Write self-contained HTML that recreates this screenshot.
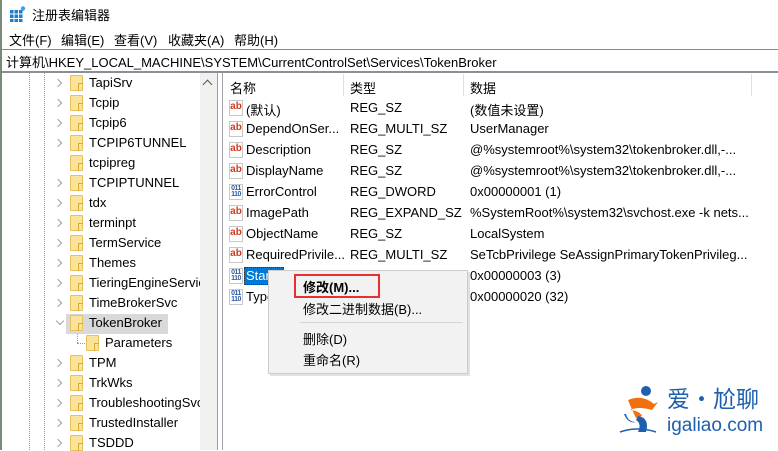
<!DOCTYPE html>
<html><head><meta charset="utf-8"><style>
*{margin:0;padding:0;box-sizing:border-box}
body{width:778px;height:450px;overflow:hidden;background:#fff;font-family:"Liberation Sans","Noto Sans CJK SC",sans-serif;font-size:12.5px;color:#000;position:relative}
.a{position:absolute;white-space:nowrap}
.fold{position:absolute;width:13px;height:16px;background:#fbe39a;border:1px solid #e8c15a;border-radius:1px}
.fold:after{content:"";position:absolute;right:-1px;bottom:-1px;width:4px;height:7px;border-left:1px solid #d9a93a;border-top:1px solid #d9a93a}
.arr{position:absolute;width:6px;height:6px;border-right:1.5px solid #a0a0a0;border-top:1.5px solid #a0a0a0;transform:rotate(45deg)}
.ico{position:absolute;width:14px;height:16px;border:1px solid #c8c8c8;background:#fff;font-size:10px;font-weight:bold;line-height:12px;text-align:center}
.ab{color:#d03c20}
.bin{color:#2a5aa8;font-size:7px;line-height:6px;letter-spacing:-0.5px;padding-top:1px}
</style></head><body>
<svg class="a" style="left:10px;top:6px" width="16" height="16" viewBox="0 0 16 16"><g fill="#1a7fd0"><rect x="0" y="4" width="3.5" height="3.5"/><rect x="4.5" y="4" width="3.5" height="3.5"/><rect x="9" y="4" width="3.5" height="3.5"/><rect x="0" y="8.5" width="3.5" height="3.5"/><rect x="4.5" y="8.5" width="3.5" height="3.5"/><rect x="9" y="8.5" width="3.5" height="3.5"/><rect x="0" y="13" width="3.5" height="3"/><rect x="4.5" y="13" width="3.5" height="3"/><rect x="9" y="13" width="3.5" height="3"/></g><circle cx="13" cy="2.5" r="2.2" fill="#3aa0e0"/></svg>
<div class="a" style="left:32px;top:5px;font-size:13px">注册表编辑器</div>
<div class="a" style="left:0;top:0;width:2px;height:450px;background:#7a8a7a"></div>
<div class="a" style="left:9px;top:30px;font-size:13px">文件(F)</div>
<div class="a" style="left:61px;top:30px;font-size:13px">编辑(E)</div>
<div class="a" style="left:114px;top:30px;font-size:13px">查看(V)</div>
<div class="a" style="left:168px;top:30px;font-size:13px">收藏夹(A)</div>
<div class="a" style="left:234px;top:30px;font-size:13px">帮助(H)</div>
<div class="a" style="left:2px;top:49px;width:776px;height:1px;background:#888"></div>
<div class="a" style="left:6px;top:52px;font-size:13px">计算机\HKEY_LOCAL_MACHINE\SYSTEM\CurrentControlSet\Services\TokenBroker</div>
<div class="a" style="left:2px;top:71px;width:776px;height:2px;background:#8a8e96"></div>
<div class="a" style="left:200px;top:73px;width:17px;height:377px;background:#f0f0f0"></div>
<div class="a" style="left:204px;top:81px;width:7px;height:7px;border-left:1.5px solid #555;border-top:1.5px solid #555;transform:rotate(45deg)"></div>
<div class="a" style="left:217px;top:73px;width:1px;height:377px;background:#a0a0a8"></div>
<div class="a" style="left:222px;top:73px;width:1px;height:377px;background:#a0a0a8"></div>
<div class="a" style="left:29px;top:73px;height:377px;border-left:1px dotted #999"></div>
<div class="a" style="left:44px;top:73px;height:377px;border-left:1px dotted #999"></div>
<div class="a" style="left:66px;top:314px;width:102px;height:20px;background:#d9d9d9"></div>
<div id="tree"></div>
<div class="a" style="left:230px;top:78px;font-size:13px">名称</div>
<div class="a" style="left:350px;top:78px;font-size:13px">类型</div>
<div class="a" style="left:470px;top:78px;font-size:13px">数据</div>
<div class="a" style="left:343px;top:74px;width:1px;height:22px;background:#e0e0e0"></div>
<div class="a" style="left:463px;top:74px;width:1px;height:22px;background:#e0e0e0"></div>
<div class="a" style="left:751px;top:74px;width:1px;height:22px;background:#e0e0e0"></div>
<div id="vals"></div>
<div class="a" style="left:270px;top:272px;width:200px;height:104px;background:#aaa;opacity:.35"></div>
<div class="a" style="left:268px;top:270px;width:200px;height:104px;background:#f2f2f2;border:1px solid #ccc"></div>
<div class="a" style="left:294px;top:274px;width:86px;height:24px;border:2px solid #e83030"></div>
<div class="a" style="left:303px;top:277px;font-weight:bold;font-size:13px">修改(M)...</div>
<div class="a" style="left:303px;top:299px;font-size:13px">修改二进制数据(B)...</div>
<div class="a" style="left:300px;top:322px;width:163px;height:1px;background:#d5d5d5"></div>
<div class="a" style="left:303px;top:329px;font-size:13px">删除(D)</div>
<div class="a" style="left:303px;top:350px;font-size:13px">重命名(R)</div>
<svg class="a" style="left:618px;top:384px" width="50" height="50" viewBox="0 0 50 50">
<circle cx="28" cy="7" r="5" fill="#1e5fae"/>
<path d="M10 16 Q24 10 36 20 L40 18 L34 26 Q20 22 12 26 Q22 27 24 32 L18 34 Q14 26 10 16Z" fill="#f07010"/>
<path d="M6 30 Q10 40 18 38 Q10 38 8 30Z" fill="#1e5fae"/>
<path d="M20 32 Q32 34 28 48 L20 48 Q24 40 18 36Z" fill="#1e5fae"/>
<path d="M2 48 Q20 42 38 48" stroke="#1e5fae" stroke-width="1.5" fill="none"/>
</svg>
<div class="a" style="left:667px;top:383px;font-size:23px;color:#1e5fae;font-family:'Noto Sans CJK SC',sans-serif;line-height:28px">爱·尬聊</div>
<div class="a" style="left:667px;top:415px;font-size:19px;color:#1e5fae">igaliao.com</div>
<script>
var t=[["TapiSrv",83],["Tcpip",103],["Tcpip6",123],["TCPIP6TUNNEL",143],["tcpipreg",163,1],["TCPIPTUNNEL",183],["tdx",203],["terminpt",223],["TermService",243],["Themes",263],["TieringEngineServic",283],["TimeBrokerSvc",303],["TokenBroker",323,2],["TPM",363],["TrkWks",383],["TroubleshootingSvc",403],["TrustedInstaller",423],["TSDDD",443]];
var h="";t.forEach(function(r){var y=r[1];
if(r[2]==2)h+='<div class="arr" style="left:57px;top:'+(y-5)+'px;transform:rotate(135deg)"></div>';
else if(!r[2])h+='<div class="arr" style="left:55px;top:'+(y-3)+'px"></div>';
h+='<div class="fold" style="left:70px;top:'+(y-8)+'px"></div><div class="a" style="left:89px;top:'+(y-8)+'px;width:111px;overflow:hidden;font-size:13px">'+r[0]+'</div>';});
h+='<div class="a" style="left:77px;top:334px;height:9px;border-left:1px dotted #999"></div><div class="a" style="left:77px;top:343px;width:8px;border-top:1px dotted #999"></div>';
h+='<div class="fold" style="left:86px;top:335px"></div><div class="a" style="left:105px;top:335px;font-size:13px">Parameters</div>';
document.getElementById("tree").innerHTML=h;
var v=[["(默认)","REG_SZ","(数值未设置)",0],["DependOnSer...","REG_MULTI_SZ","UserManager",0],["Description","REG_SZ","@%systemroot%\\system32\\tokenbroker.dll,-...",0],["DisplayName","REG_SZ","@%systemroot%\\system32\\tokenbroker.dll,-...",0],["ErrorControl","REG_DWORD","0x00000001 (1)",1],["ImagePath","REG_EXPAND_SZ","%SystemRoot%\\system32\\svchost.exe -k nets...",0],["ObjectName","REG_SZ","LocalSystem",0],["RequiredPrivile...","REG_MULTI_SZ","SeTcbPrivilege SeAssignPrimaryTokenPrivileg...",0],["Start","","0x00000003 (3)",1],["Type","","0x00000020 (32)",1]];
h="";v.forEach(function(r,i){var y=108+i*21;
h+='<div class="ico '+(r[3]?'bin':'ab')+'" style="left:229px;top:'+(y-8)+'px">'+(r[3]?'011<br>110':'ab')+'</div>';
if(i==8)h+='<div class="a" style="left:244px;top:'+(y-9)+'px;width:40px;height:18px;background:#0078d7;border:1px dotted #333"></div><div class="a" style="left:246px;top:'+(y-8)+'px;color:#fff;font-size:13px">Start</div>';
else h+='<div class="a" style="left:246px;top:'+(y-8)+'px;font-size:13px">'+r[0]+'</div>';
h+='<div class="a" style="left:350px;top:'+(y-8)+'px;font-size:13px">'+r[1]+'</div><div class="a" style="left:470px;top:'+(y-8)+'px;font-size:13px">'+r[2]+'</div>';});
document.getElementById("vals").innerHTML=h;
</script>
</body></html>
